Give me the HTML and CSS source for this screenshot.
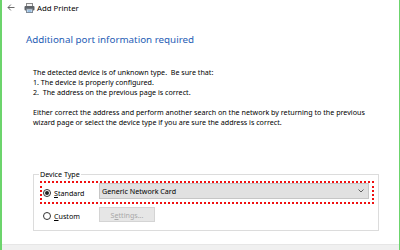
FILE: index.html
```html
<!DOCTYPE html>
<html>
<head>
<meta charset="utf-8">
<link rel="stylesheet" href="styles.css">
</head>
<body>
<div class="window">
  <div class="titlebar">
    <svg class="back" width="8" height="7" viewBox="0 0 8 7"><path d="M7.5 3.5H1M3.8 0.6L1 3.5l2.8 2.9" fill="none" stroke="#6a6a6a" stroke-width="1"/></svg>
    <svg class="printer" width="11" height="10" viewBox="0 0 11 10">
      <rect x="2.5" y="0.5" width="6" height="3" fill="#f4f4f4" stroke="#8a8a8a"/>
      <rect x="0.5" y="3" width="10" height="4.5" rx="1" fill="#5f6368"/>
      <rect x="2.5" y="6" width="6" height="3.5" fill="#e8eef4" stroke="#7f8a96"/>
      <rect x="3.5" y="7.5" width="4" height="1" fill="#4a90d0"/>
    </svg>
    <span class="title">Add Printer</span>
  </div>
  <div class="content">
    <h1 class="heading">Additional port information required</h1>
    <p class="text">The detected device is of unknown type.&nbsp; Be sure that:<br>1. The device is properly configured.<br>2.&nbsp; The address on the previous page is correct.</p>
    <p class="text">Either correct the address and perform another search on the network by returning to the previous<br>wizard page or select the device type if you are sure the address is correct.</p>
    <fieldset class="group">
      <legend class="legend">Device Type</legend>
      <div class="row highlight">
        <span class="radio checked"></span><span class="label"><u>S</u>tandard</span>
        <div class="combo"><span>Generic Network Card</span>
          <svg width="6" height="4" viewBox="0 0 6 4"><path d="M0.5 0.5L3 3l2.5-2.5" fill="none" stroke="#606060" stroke-width="1"/></svg>
        </div>
      </div>
      <div class="row plain">
        <span class="radio"></span><span class="label"><u>C</u>ustom</span>
        <div class="button">S<u>e</u>ttings...</div>
      </div>
    </fieldset>
  </div>
  <div class="footer"></div>
</div>
</body>
</html>
```

FILE: styles.css
```css
html, body {
  margin: 0;
  padding: 0;
  background: #ffffff;
}
body {
  font-family: "Noto Sans", "Open Sans", sans-serif;
  color: #000;
}
.window {
  width: 400px;
  height: 250px;
  box-sizing: border-box;
  border-left: 2px solid #6cd46c;
  border-right: 1px solid #6cd46c;
  display: flex;
  flex-direction: column;
  background: #fff;
}
.titlebar {
  height: 15px;
  display: flex;
  align-items: center;
  padding-left: 5px;
}
.back { margin-right: 9px; }
.printer { margin-right: 2px; }
.title {
  font-size: 7.8px;
  color: #000;
}
.content {
  flex: 1;
  padding-left: 24px;
}
.heading {
  margin: 17px 0 0 0;
  font-size: 9.8px;
  line-height: 16px;
  font-weight: normal;
  color: #1f5db5;
}
.text {
  margin: 19px 0 0 7px;
  font-size: 7.15px;
  line-height: 10px;
}
.text + .text { margin-top: 10px; }
.group {
  margin: 42px 20px 0 7px;
  padding: 0 4px 8px 6px;
  border: 1px solid #dcdcdc;
  min-width: 0;
}
.legend {
  font-size: 7.15px;
  line-height: 10px;
  padding: 0 1px;
  margin-left: -1px;
  color: #000;
}
.row {
  display: flex;
  align-items: center;
}
.highlight {
  margin-top: 2px;
  border: 2px dotted #f01010;
  padding: 0 3px 3px 1px;
  margin-left: 0;
}
.plain {
  margin-top: 3px;
  padding-left: 3px;
}
.radio {
  width: 6px;
  height: 6px;
  border: 1px solid #333;
  border-radius: 50%;
  position: relative;
  margin-top: 3px;
  flex: none;
}
.radio.checked::after {
  content: "";
  position: absolute;
  left: 1px;
  top: 1px;
  width: 4px;
  height: 4px;
  border-radius: 50%;
  background: #222;
}
.label {
  font-size: 7.15px;
  line-height: 10px;
  margin-left: 3px;
  margin-top: 3px;
  width: 45px;
}
.label u { text-decoration: underline; }
.combo {
  flex: 1;
  height: 16px;
  box-sizing: border-box;
  background: #e1e1e1;
  border: 1px solid #c6c6c6;
  display: flex;
  align-items: center;
  justify-content: space-between;
  padding: 0 4px 0 2px;
  font-size: 7.15px;
}
.button {
  width: 56px;
  height: 15px;
  box-sizing: border-box;
  background: #e6e6e6;
  border: 1px solid #d4d4d4;
  color: #a8a8a8;
  font-size: 7.15px;
  display: flex;
  align-items: center;
  justify-content: center;
}
.footer {
  height: 5px;
  background: #f0f0f0;
  border-top: 1px solid #e6e6e6;
}
```
